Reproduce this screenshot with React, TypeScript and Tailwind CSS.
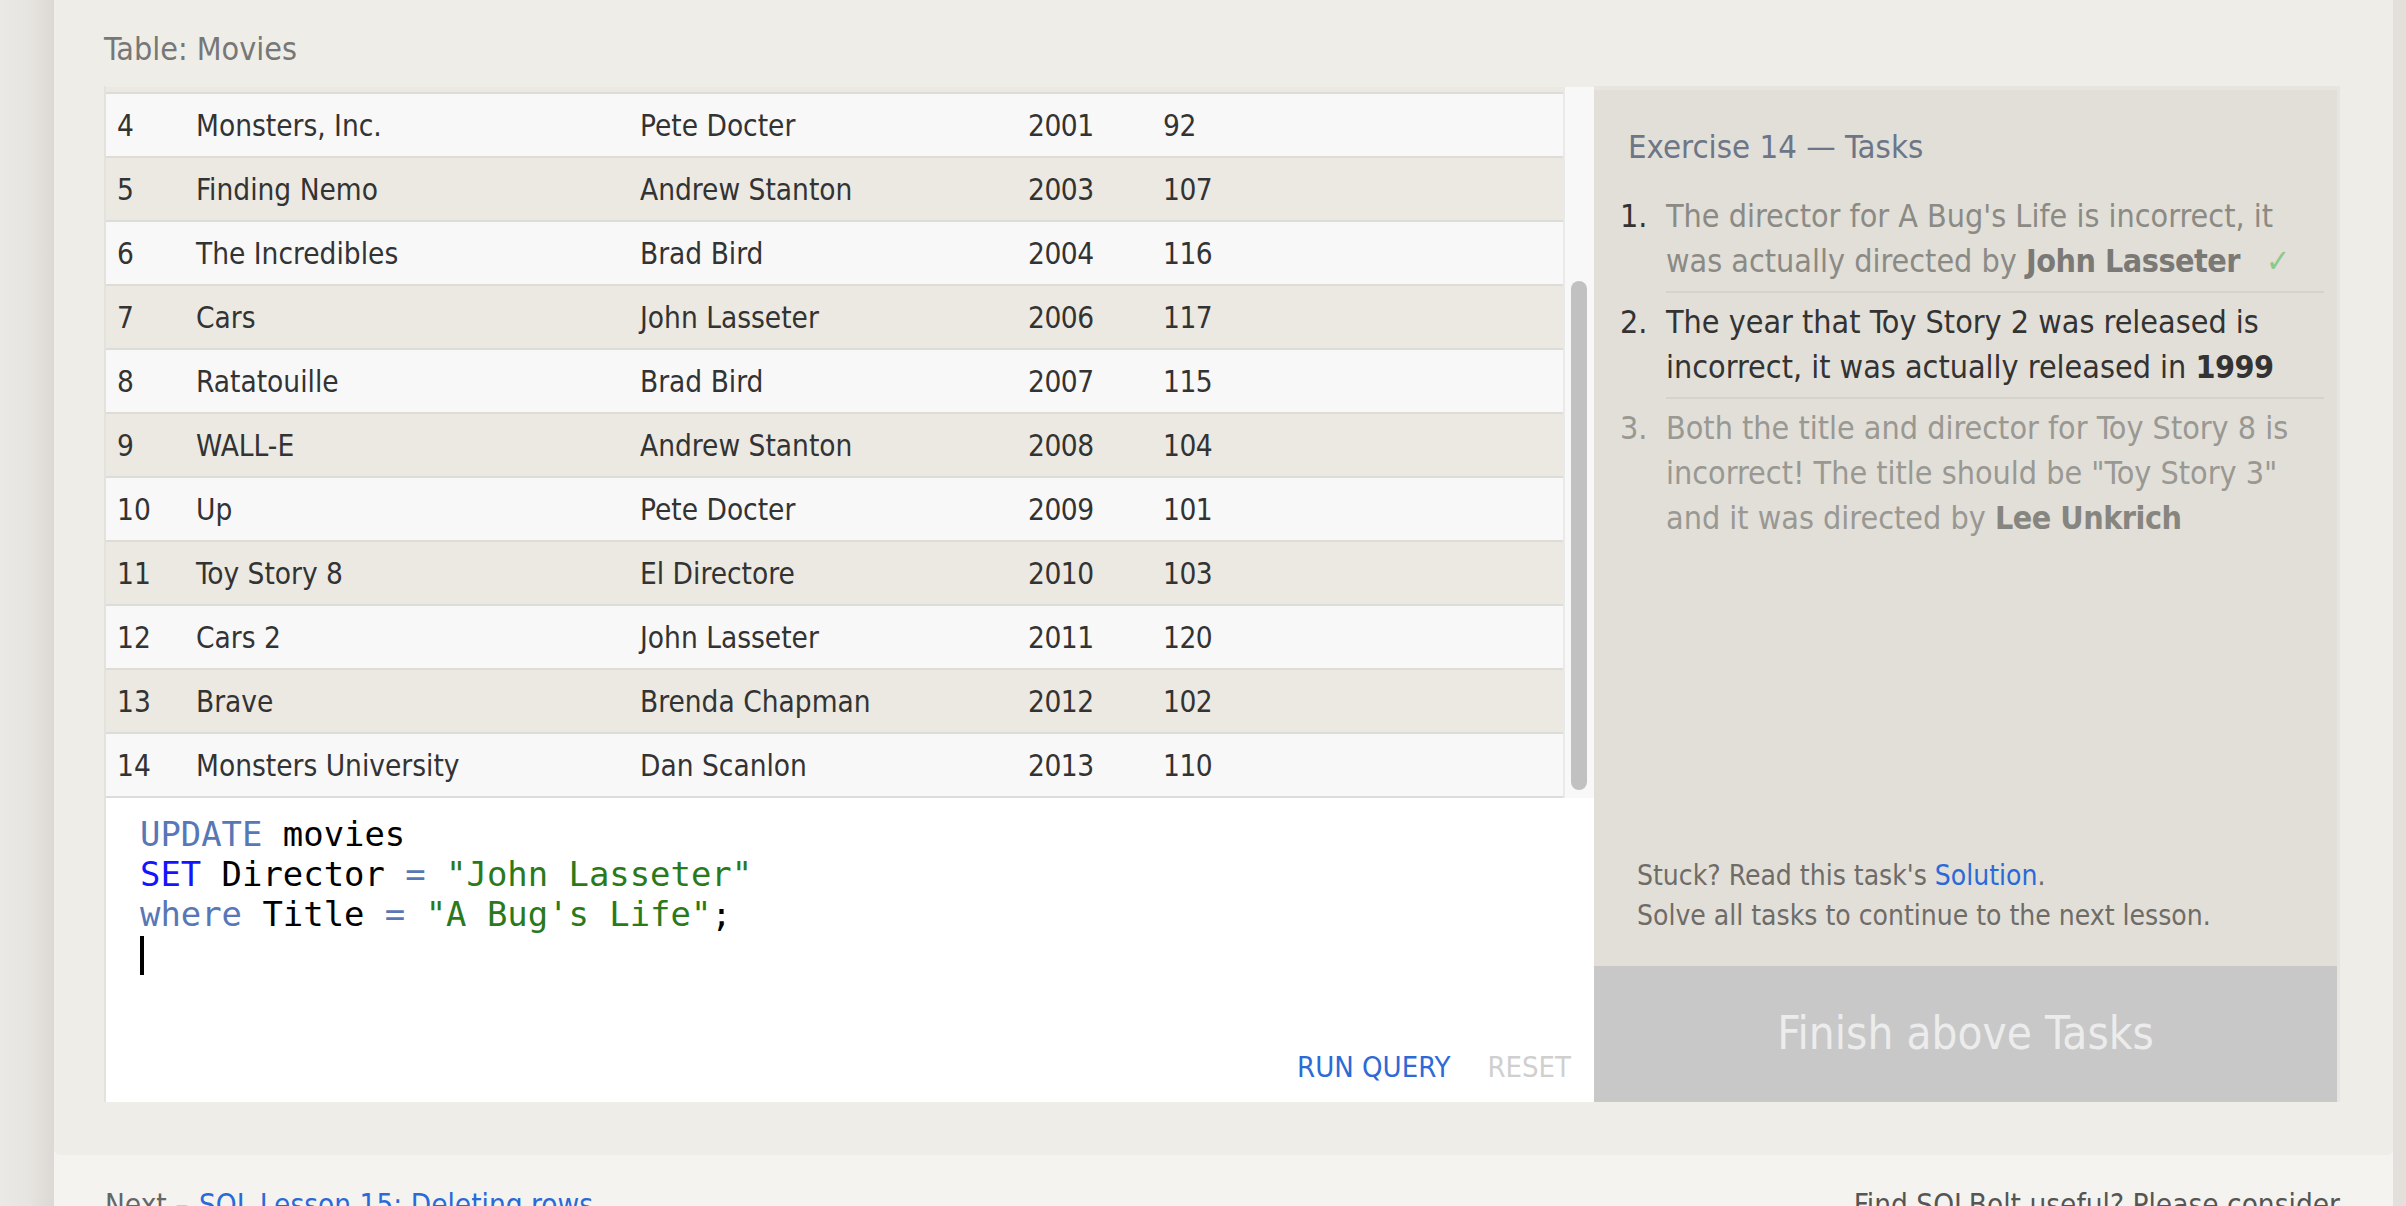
import React from 'react';

type Movie = {
  id: number;
  title: string;
  director: string;
  year: number;
  length: number;
};

const movies: Movie[] = [
  { id: 4, title: 'Monsters, Inc.', director: 'Pete Docter', year: 2001, length: 92 },
  { id: 5, title: 'Finding Nemo', director: 'Andrew Stanton', year: 2003, length: 107 },
  { id: 6, title: 'The Incredibles', director: 'Brad Bird', year: 2004, length: 116 },
  { id: 7, title: 'Cars', director: 'John Lasseter', year: 2006, length: 117 },
  { id: 8, title: 'Ratatouille', director: 'Brad Bird', year: 2007, length: 115 },
  { id: 9, title: 'WALL-E', director: 'Andrew Stanton', year: 2008, length: 104 },
  { id: 10, title: 'Up', director: 'Pete Docter', year: 2009, length: 101 },
  { id: 11, title: 'Toy Story 8', director: 'El Directore', year: 2010, length: 103 },
  { id: 12, title: 'Cars 2', director: 'John Lasseter', year: 2011, length: 120 },
  { id: 13, title: 'Brave', director: 'Brenda Chapman', year: 2012, length: 102 },
  { id: 14, title: 'Monsters University', director: 'Dan Scanlon', year: 2013, length: 110 },
];

function MoviesTable() {
  return (
    <div className="flex h-[711px]">
      <div className="flex flex-1 flex-col">
        {/* tail of row 3, scrolled out of view */}
        <div className="h-[7px] border-b-2 border-[#dddcd8] bg-[#ebe9e2]" />
        {movies.map((m, i) => (
          <div
            key={m.id}
            className={`flex h-[64px] items-center border-b-2 border-[#dddcd8] pl-[11px] pt-[2px] text-[29.5px] text-[#333] ${
              i % 2 === 0 ? 'bg-[#f8f8f8]' : 'bg-[#ebe9e2]'
            }`}
          >
            <span className="w-[79px]">{m.id}</span>
            <span className="w-[444px]">{m.title}</span>
            <span className="w-[388px]">{m.director}</span>
            <span className="w-[135px] tracking-[-0.5px]">{m.year}</span>
            <span className="flex-1 tracking-[-0.5px]">{m.length}</span>
          </div>
        ))}
      </div>
      <div className="flex w-[31px] flex-col border-l-2 border-[#e9e9e9] bg-[#f8f8f8] pl-[6px] pt-[194px] pb-[8px]">
        <div className="h-full w-[16px] rounded-full bg-[#c1c1c1]" />
      </div>
    </div>
  );
}

function QueryEditor() {
  return (
    <div className="flex h-[304px] flex-col bg-white">
      <div className="flex-1 pl-[34px] pt-[17px] font-['DejaVu_Sans_Mono',monospace] text-[33.9px] leading-[40px] text-black">
        <div className="whitespace-pre">
          <span className="text-[#5877b6]">UPDATE</span> movies
        </div>
        <div className="whitespace-pre">
          <span className="text-[#1414ff]">SET</span> Director <span className="text-[#5877b6]">=</span>{' '}
          <span className="text-[#2a7a1c]">"John Lasseter"</span>
        </div>
        <div className="whitespace-pre">
          <span className="text-[#5877b6]">where</span> Title <span className="text-[#5877b6]">=</span>{' '}
          <span className="text-[#2a7a1c]">"A Bug's Life"</span>;
        </div>
        <div className="flex h-[40px] items-center">
          <div className="h-[39px] w-[4px] bg-black" />
        </div>
      </div>
      <div className="flex justify-end gap-[37px] pr-[23px] pb-[17px] text-[29px] leading-[36px]">
        <span className="text-[#2d6ad6]">RUN QUERY</span>
        <span className="text-[#cfcfcf]">RESET</span>
      </div>
    </div>
  );
}

function TaskPanel() {
  return (
    <div className="flex w-[746px] flex-col border-t-4 border-r-[3px] border-[#e7e5df] bg-[#e1dfd8]">
      <div className="pl-[26px] pr-[13px] pt-[37px]">
        <h2 className="pl-[8px] text-[32.7px] leading-[40px] text-[#6d7687]">Exercise 14 — Tasks</h2>
        <ol className="mt-[20px] text-[32px] leading-[45px]">
          <li className="flex">
            <span className="w-[46px] pt-[7px] text-[#333]">1.</span>
            <div className="flex-1 border-b-2 border-[#d5d3ca] py-[7px] text-[#8b8a85]">
              The director for A Bug's Life is incorrect, it
              <br />
              was actually directed by{' '}
              <b className="font-semibold tracking-[-0.5px] text-[#7a7975]">John Lasseter</b>
              <span className="ml-[26px] text-[#8cc98c]">✓</span>
            </div>
          </li>
          <li className="flex">
            <span className="w-[46px] pt-[7px] text-[#333]">2.</span>
            <div className="flex-1 border-b-2 border-[#d5d3ca] py-[7px] text-[#333]">
              The year that Toy Story 2 was released is
              <br />
              incorrect, it was actually released in <b className="font-semibold tracking-[-0.5px]">1999</b>
            </div>
          </li>
          <li className="flex">
            <span className="w-[46px] pt-[7px] text-[#999893]">3.</span>
            <div className="flex-1 py-[7px] text-[#999893]">
              Both the title and director for Toy Story 8 is
              <br />
              incorrect! The title should be "Toy Story 3"
              <br />
              and it was directed by{' '}
              <b className="font-semibold tracking-[-0.5px] text-[#86857f]">Lee Unkrich</b>
            </div>
          </li>
        </ol>
      </div>
      <div className="flex-1" />
      <div className="mb-[30px] pl-[43px] text-[28px] leading-[40px] text-[#6f6c68]">
        <p>
          Stuck? Read this task's <span className="text-[#2a6ad8]">Solution</span>.
        </p>
        <p>Solve all tasks to continue to the next lesson.</p>
      </div>
      <div className="flex h-[136px] items-center justify-center bg-[#c8c8c8] text-[45.5px] text-[#ececec]">
        Finish above Tasks
      </div>
    </div>
  );
}

export default function App() {
  return (
    <div className="flex h-[1206px] w-[2406px] overflow-hidden bg-[#e3e0dc] font-['DejaVu_Sans_Condensed','DejaVu_Sans',sans-serif] font-stretch-condensed">
      <div className="w-[54px] shrink-0 bg-linear-to-r from-[#ebe9e5] via-[#e7e5e1] to-[#dcd9d4]" />
      <div className="flex w-[2339px] shrink-0 flex-col bg-[#f4f3ef]">
        <div className="h-[1155px] shrink-0 rounded-b-md bg-[#efede7] pl-[50px] pr-[53px]">
          <h1 className="pt-[29px] text-[32px] leading-[40px] text-[#777]">Table: Movies</h1>
          <div className="mt-[17px] flex h-[1016px]">
            <div className="flex flex-1 flex-col border-l-2 border-[#e4e2dc] pt-px">
              <MoviesTable />
              <QueryEditor />
            </div>
            <TaskPanel />
          </div>
        </div>
        <div className="flex shrink-0 justify-between pl-[51px] pr-[53px] pt-[32px] text-[29.5px] leading-[36px] text-[#666]">
          <span>
            Next – <span className="ml-[2px] text-[#2a6ad8]">SQL Lesson 15: Deleting rows</span>
          </span>
          <span className="text-[#555]">Find SQLBolt useful? Please consider</span>
        </div>
      </div>
      <div className="flex-1 bg-[#e3e0dc]" />
    </div>
  );
}
